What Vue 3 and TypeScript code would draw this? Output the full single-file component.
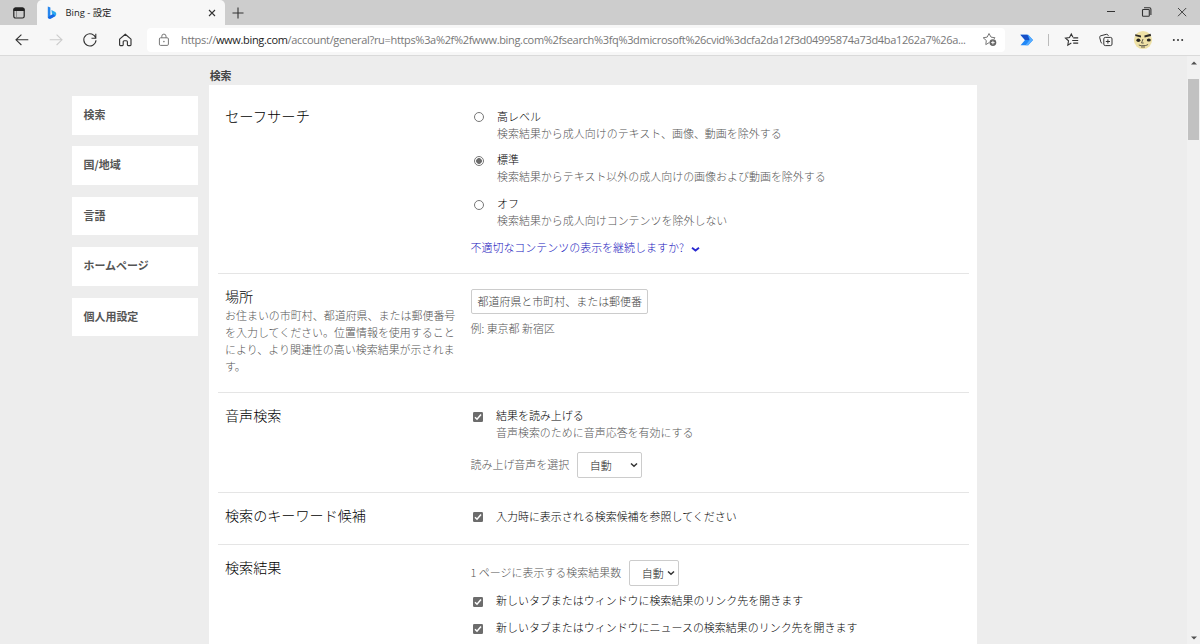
<script setup lang="ts">
const nav: string[] = ['検索', '国/地域', '言語', 'ホームページ', '個人用設定']

interface Level { title: string; note: string; on: boolean }
const levels: Level[] = [
  { title: '高レベル', note: '検索結果から成人向けのテキスト、画像、動画を除外する', on: false },
  { title: '標準', note: '検索結果からテキスト以外の成人向けの画像および動画を除外する', on: true },
  { title: 'オフ', note: '検索結果から成人向けコンテンツを除外しない', on: false },
]
const linkOptions: string[] = [
  '新しいタブまたはウィンドウに検索結果のリンク先を開きます',
  '新しいタブまたはウィンドウにニュースの検索結果のリンク先を開きます',
]
</script>

<template>
  <div class="window">
    <header class="tabs">
      <svg class="tab-menu" viewBox="0 0 14 14"><rect x="1.8" y="2" width="10.4" height="10" rx="1.8" fill="none" stroke="#222" stroke-width="1.2" /><path d="M1.5 5V3.5Q1.5 1.6 3.5 1.6h7q2 0 2 1.9V5z" fill="#222" /><path d="M4.5 5v7" stroke="#777" stroke-width=".7" /></svg>
      <div class="tab">
        <svg class="bing" viewBox="0 0 10 13"><path d="M.8.5 3.4 1.5v8.2L.8 11.3z" fill="#2787ee" /><path d="M4.4 4.1 8.3 6c1.4 1 1.2 3 .1 4L4 12.4c-1.5.7-3 .1-3.2-1.6l5-2.6-.9-.7z" fill="#29a9ef" /><path d="m.8 10.9 2.6-1.4 2.7-1.4L8.5 10 4 12.4c-1.6.6-3.1.1-3.2-1.5z" fill="#1766e4" /></svg>
        <span class="tab-title">Bing - 設定</span>
        <svg class="tab-close" viewBox="0 0 8 8"><path d="m1 1 6 6m0-6-6 6" stroke="#333" stroke-width="1.1" /></svg>
      </div>
      <svg class="plus" viewBox="0 0 12 12"><path d="M6 .5v11M.5 6h11" stroke="#333" stroke-width="1.1" /></svg>
      <div class="controls">
        <svg viewBox="0 0 12 12"><path d="M2 5.5h8" stroke="#333" /></svg>
        <svg viewBox="0 0 12 12" fill="none" stroke="#333" stroke-width="1.1"><rect x="1.5" y="3.5" width="6.8" height="6.8" rx=".8" /><path d="M3 1.8h5.5q1.4 0 1.4 1.4V9" /></svg>
        <svg viewBox="0 0 12 12"><path d="m2 2 8.2 8.2m0-8.2L2 10.2" stroke="#333" stroke-width=".9" /></svg>
      </div>
    </header>

    <div class="toolbar">
      <div class="buttons">
        <svg viewBox="0 0 16 16" fill="none" stroke="#333" stroke-width="1.1"><path d="M14.3 7.8H2m5.4-5.2L2 7.8l5.4 5.2" /></svg>
        <svg viewBox="0 0 16 16" fill="none" stroke="#ccc" stroke-width="1.1"><path d="M1.7 7.8H14M8.6 2.6 14 7.8 8.6 13" /></svg>
        <svg viewBox="0 0 16 16" fill="none" stroke="#333" stroke-width="1.1"><path d="M13.8 6.2A6.1 6.1 0 1 0 14 8.3M13.8 1.8v4.5H9.5" /></svg>
        <svg viewBox="0 0 16 16" fill="none" stroke="#333" stroke-width="1.15"><path d="M2.6 7.1 8.3 2.2 14 7.1v5.7q0 .8-.8.8h-2q-.8 0-.8-.8V9.7q0-1-1-1H7.2q-1 0-1 1v3.1q0 .8-.8.8h-2q-.8 0-.8-.8z" stroke-linejoin="round" /></svg>
      </div>
      <div class="address">
        <svg class="lock" viewBox="0 0 12 14" fill="none" stroke="#777"><rect x="1.4" y="4.8" width="9" height="7.6" rx="1.2" /><path d="M3.8 4.8V3.2a2.1 2.1 0 0 1 4.2 0v1.6" /><circle cx="5.9" cy="8.6" r=".8" fill="#777" stroke="none" /></svg>
        <span class="url">https://<b>www.bing.com</b>/account/general?ru=https%3a%2f%2fwww.bing.com%2fsearch%3fq%3dmicrosoft%26cvid%3dcfa2da12f3d04995874a73d4ba1262a7%26a...</span>
        <svg class="star-add" viewBox="0 0 16 16"><path d="m7.2 10.6-3.4 2 .5-4.1L1.2 5.8l4-.7L7 1.5l2 3.6 4 .7-1 1.1" fill="none" stroke="#777" /><circle cx="10.9" cy="10.6" r="3.4" fill="#666" /><path d="M10.9 8.8v3.6M9.1 10.6h3.6" stroke="#fff" stroke-width=".9" /></svg>
      </div>
      <svg class="flow" viewBox="0 0 14 12"><path d="M.4.8h7.8l4.8 5.3-4.8 5.1H.6L5 6.1z" fill="#2188f7" /><path d="M.4.8h6.9L9.7 6 5 6.1z" fill="#164fc7" /><path d="M8.2.8 13 6.1l-4.8 5.1H5.5L9.7 6z" fill="#57adff" /></svg>
      <i class="bar"></i>
      <svg class="fav" viewBox="0 0 16 16" fill="none" stroke="#333" stroke-width="1.1"><path d="m7.3 11-3.5 2.2.7-4.4-3-2.7 4-.6L7.3 2l1.6 3.2M9.2 5.9h5M8.2 8.5h6M9.2 11.1h5" /></svg>
      <svg class="collect" viewBox="0 0 16 16" fill="none" stroke="#333" stroke-width="1"><rect x="5.8" y="5.4" width="8.2" height="8.2" rx="1.5" /><path d="M9.9 7.4v4.2M7.8 9.5H12M4.2 11.4Q3.1 11 2.8 9.9L1.7 5.4Q1.5 4.2 2.7 3.8L8.4 2.3q1.3-.2 1.7 1l.2.7" /></svg>
      <svg class="face" viewBox="0 0 20 20"><circle cx="10" cy="10" r="9.1" fill="#eee1a6" /><path d="M2.2 4.2 8 5.5v2L2.3 6zM11.4 5.5l6.2-1.7.5 2.2-6.5 1.5z" fill="#302d29" /><ellipse cx="5.4" cy="10.2" rx="2" ry="1.7" fill="#262523" /><ellipse cx="15.8" cy="10" rx="2" ry="1.6" fill="#262523" /><path d="m10 9-1.5 4h2.2M5.8 15l2.3.7 4.7-.2 2.3-1M8 17h4" fill="none" stroke="#555044" stroke-width=".9" /></svg>
      <svg class="more" viewBox="0 0 12 4" fill="#333"><circle cx="1.8" cy="2" r="1" /><circle cx="6" cy="2" r="1" /><circle cx="10.2" cy="2" r="1" /></svg>
    </div>

    <main class="page">
      <nav class="side"><a v-for="item in nav" :key="item">{{ item }}</a></nav>
      <div class="content">
        <h1>検索</h1>
        <div class="panel">
          <section class="safe">
            <h2>セーフサーチ</h2>
            <div class="field">
              <div v-for="level in levels" :key="level.title" class="level">
                <i class="radio" :class="{ on: level.on }"></i>
                <div><strong>{{ level.title }}</strong><p>{{ level.note }}</p></div>
              </div>
              <a class="link">不適切なコンテンツの表示を継続しますか?<svg viewBox="0 0 8 6"><path d="m.9 1.5 3.1 2.4 3.1-2.4" fill="none" stroke="#2a2ad0" stroke-width="1.7" /></svg></a>
            </div>
          </section>
          <section class="place">
            <div class="heading"><h2>場所</h2><p>お住まいの市町村、都道府県、または郵便番号を入力してください。位置情報を使用することにより、より関連性の高い検索結果が示されます。</p></div>
            <div class="field"><div class="input">都道府県と市町村、または郵便番</div><p class="example">例: 東京都 新宿区</p></div>
          </section>
          <section class="voice">
            <h2>音声検索</h2>
            <div class="field">
              <div class="option"><svg class="check" viewBox="0 0 10 10"><rect width="10" height="10" rx="1.3" fill="#6c6c6c" /><path d="m2 5.2 2 2 4-4.8" fill="none" stroke="#fff" stroke-width="1.5" /></svg><div><strong>結果を読み上げる</strong><p>音声検索のために音声応答を有効にする</p></div></div>
              <div class="choose"><span>読み上げ音声を選択</span><div class="select">自動<svg viewBox="0 0 8 6"><path d="m1 1.5 3 2.8 3-2.8" fill="none" stroke="#333" stroke-width="1.5" /></svg></div></div>
            </div>
          </section>
          <section class="suggest">
            <h2>検索のキーワード候補</h2>
            <div class="field"><div class="option"><svg class="check" viewBox="0 0 10 10"><rect width="10" height="10" rx="1.3" fill="#6c6c6c" /><path d="m2 5.2 2 2 4-4.8" fill="none" stroke="#fff" stroke-width="1.5" /></svg><strong>入力時に表示される検索候補を参照してください</strong></div></div>
          </section>
          <section class="results">
            <h2>検索結果</h2>
            <div class="field">
              <div class="choose"><span class="count">1 ページに表示する検索結果数</span><div class="select small">自動<svg viewBox="0 0 8 6"><path d="m1 1.5 3 2.8 3-2.8" fill="none" stroke="#333" stroke-width="1.5" /></svg></div></div>
              <div v-for="text in linkOptions" :key="text" class="option"><svg class="check" viewBox="0 0 10 10"><rect width="10" height="10" rx="1.3" fill="#6c6c6c" /><path d="m2 5.2 2 2 4-4.8" fill="none" stroke="#fff" stroke-width="1.5" /></svg><strong>{{ text }}</strong></div>
            </div>
          </section>
        </div>
      </div>
      <div class="scroll"><svg viewBox="0 0 6 4"><path d="m0 3.5 3-3 3 3z" fill="#505050" /></svg><i></i><svg class="down" viewBox="0 0 6 4"><path d="m0 .5 3 3 3-3z" fill="#505050" /></svg></div>
    </main>
  </div>
</template>

<style>
html, body { margin: 0; overflow: hidden; }
</style>
<style scoped>
* { box-sizing: border-box; }
h1, h2, p { margin: 0; font-weight: 400; }
svg { display: block; flex: none; }
.window { width: 1200px; height: 644px; overflow: hidden; display: flex; flex-direction: column; background: #ededed; color: #222; font: 300 10.97px/17px "Noto Sans CJK JP", sans-serif; white-space: nowrap; }
.tabs { height: 25px; flex: none; display: flex; align-items: center; background: #cdcdcd; }
.tab-menu { width: 14px; height: 14px; margin-left: 12px; margin-right: 11px; }
.tab { width: 188px; height: 25px; background: #f7f7f7; border-radius: 5px 5px 0 0; display: flex; align-items: center; padding: 0 9.5px 0 10px; }
.bing { width: 10px; height: 13px; }
.tab-title { margin-left: 8.5px; font-family: "Open Sans", "Noto Sans CJK JP", sans-serif; font-size: 9.4px; font-weight: 400; }
.tab-close { width: 8px; height: 8px; margin-left: auto; }
.plus { width: 12px; height: 12px; margin-left: 7px; }
.controls { display: flex; gap: 23.5px; margin-left: auto; margin-right: 12px; margin-top: -1px; }
.controls svg { width: 12px; height: 12px; }
.toolbar { height: 31px; flex: none; display: flex; align-items: center; background: #f7f7f7; border-bottom: 1px solid #dadada; }
.buttons { display: flex; gap: 18.2px; width: 133px; margin-left: 14px; flex: none; }
.buttons svg { width: 16px; height: 16px; }
.address { width: 858px; height: 24px; flex: none; background: #fff; border-radius: 4px; display: flex; align-items: center; padding: 0 8px 0 11px; }
.lock { width: 12px; height: 14px; }
.url { margin-left: 11px; margin-top: -1px; width: 788px; flex: none; font: 400 11px/17px "Open Sans", sans-serif; letter-spacing: -.33px; color: #777; }
.url b { color: #222; font-weight: 400; }
.star-add { width: 16px; height: 16px; margin-left: 13px; }
.flow { width: 14px; height: 12px; margin-left: 15px; }
.bar { width: 1px; height: 12px; background: #bbb; margin-left: 14px; }
.fav { width: 16px; height: 16px; margin-left: 15px; }
.collect { width: 16px; height: 16px; margin-left: 18px; }
.face { width: 20px; height: 20px; margin-left: 19px; }
.more { width: 12px; height: 4px; margin-left: 19px; }
.page { flex: 1; min-height: 0; display: flex; align-items: flex-start; }
.side { width: 125.5px; margin: 40px 0 0 72px; display: flex; flex-direction: column; gap: 11.7px; flex: none; }
.side a { height: 38.7px; padding-left: 11.5px; background: #fff; color: #555; font-weight: 700; line-height: 37px; }
.content { width: 768px; margin-left: 11.5px; flex: none; }
h1 { height: 29px; line-height: 39px; padding-left: .7px; font-size: 10.94px; font-weight: 700; color: #444; }
.panel { background: #fff; padding: 0 8.5px; }
section { display: flex; align-items: flex-start; border-bottom: 1px solid #e5e5e5; padding-left: 7.5px; }
h2 { width: 245.5px; flex: none; font-size: 14.1px; font-weight: 300; line-height: 20px; color: #000; margin-top: 12px; }
.heading { width: 245.5px; flex: none; }
.heading p { width: 231px; white-space: normal; word-break: break-all; margin-top: 1px; }
p { color: #555; font-weight: 300; }
strong { display: block; font-weight: 300; color: #000; }
.field { width: 490px; }
.safe { height: 189px; }
.safe h2 { margin-top: 21px; font-size: 14.3px; }
.safe .field { padding-top: 22.7px; }
.level { display: flex; height: 43.8px; }
.level div { margin-left: .5px; }
.radio { width: 10px; height: 10px; flex: none; margin: 4.5px 12.5px 0 3.5px; border: 1px solid #777; border-radius: 50%; }
.radio.on { background: radial-gradient(circle, #6a6a6a 0 2.5px, #fff 3.2px); }
.link { display: flex; align-items: center; color: #2015bd; line-height: 17px; }
.link svg { width: 9px; height: 7px; margin-left: 7px; margin-top: 3px; }
.place { height: 119px; }
.input { margin-top: 15px; width: 177px; height: 25px; border: 1px solid #ccc; border-radius: 2px; padding-left: 6px; line-height: 23px; color: #444; }
.example { margin-top: 6px; }
.voice { height: 100px; }
.voice .field { padding-top: 14px; }
.option { display: flex; height: 34px; }
.check { width: 10px; height: 10px; margin: 4.5px 13px 0 2.5px; }
.choose { display: flex; align-items: center; height: 26px; color: #555; }
.choose span { margin-top: -1px; }
.voice .choose { margin-top: 11px; }
.select { display: flex; align-items: center; width: 65px; height: 26px; margin-left: 8px; border: 1px solid #ccc; border-radius: 2px; padding: 0 3px 0 11.5px; color: #222; justify-content: space-between; line-height: 22px; }
.select svg { width: 8px; height: 6px; }
.select.small { width: 50px; margin-left: 8.2px; }
.suggest { height: 52px; }
.suggest .field { padding-top: 15px; }
.suggest .check { margin-top: 4px; }
.results { height: 110px; }
.results .field { padding-top: 15px; }
.results .option { height: 27.3px; }
.results .choose + .option { margin-top: 6px; }
.scroll { align-self: stretch; width: 13px; margin-left: auto; background: #f1f1f1; display: flex; flex-direction: column; align-items: center; }
.scroll svg { width: 6px; height: 4px; margin-top: 5px; }
.scroll i { width: 11px; height: 61px; margin-top: 14px; background: #c1c1c1; }
.scroll .down { margin: auto 0 4px; }
</style>
